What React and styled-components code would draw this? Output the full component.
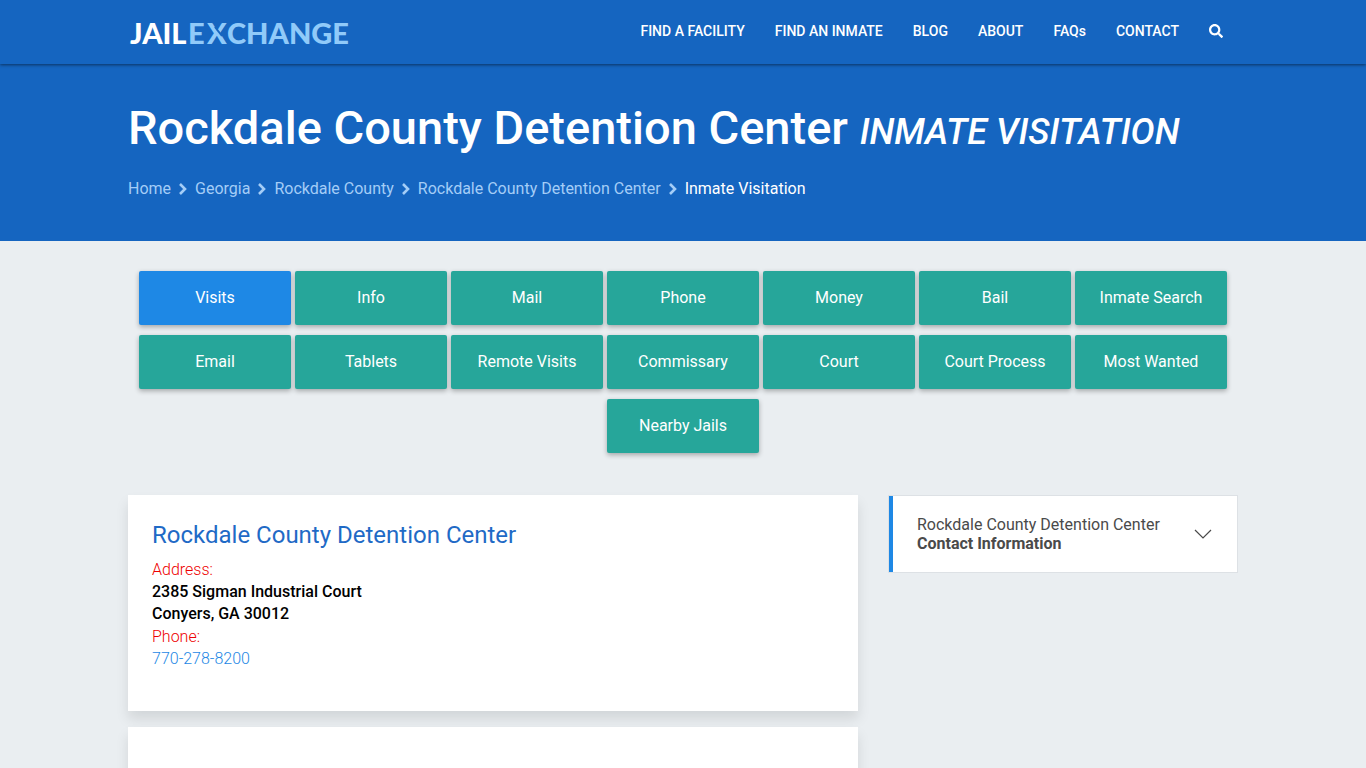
import React, { useState } from 'react';
import styled, { createGlobalStyle } from 'styled-components';
import { FaSearch } from 'react-icons/fa';

const navLinks = ['FIND A FACILITY', 'FIND AN INMATE', 'BLOG', 'ABOUT', 'FAQs', 'CONTACT']
const crumbs = ['Home', 'Georgia', 'Rockdale County', 'Rockdale County Detention Center']
const sections = [
    'Visits', 'Info', 'Mail', 'Phone', 'Money', 'Bail', 'Inmate Search',
    'Email', 'Tablets', 'Remote Visits', 'Commissary', 'Court', 'Court Process', 'Most Wanted',
    'Nearby Jails',
]

const Logo = () => (
    <svg width='224' height='44' viewBox='0 0 224 44' role='img' aria-label='JailExchange'>
        <g fontFamily='Lato, "Open Sans", sans-serif' fontSize='29' fontWeight='900'>
            <text x='2' y='35' fill='#fff'>JAIL</text>
            <text x='60' y='35' fill='#90caf9'>E</text>
            <text x='79' y='35' fill='#90caf9'>X</text>
            <text x='99' y='35' fill='#90caf9'>CHANGE</text>
        </g>
        {/* cut through the X */}
        <path d='M87 18 L94 27' stroke='#1565c0' strokeWidth='2' />
    </svg>
)

export default function App() {

    const [active, setActive] = useState('Visits')
    const [isOpen, setIsOpen] = useState(false)

    return (
        <>
            <GlobalStyle />
            <Header>
                <HeaderInner>
                    <LogoLink href='#'><Logo /></LogoLink>
                    <Nav>
                        {navLinks.map((name) => <NavLink href='#' key={name}>{name}</NavLink>)}
                        <SearchButton aria-label='Search'><FaSearch /></SearchButton>
                    </Nav>
                </HeaderInner>
            </Header>
            <Hero>
                <Container>
                    <Title>Rockdale County Detention Center <em>INMATE VISITATION</em></Title>
                    <Breadcrumb aria-label='Breadcrumb'>
                        {crumbs.map((name) => (
                            <React.Fragment key={name}>
                                <a href='#'>{name}</a>
                                <svg width='8' height='12' viewBox='0 0 8 12' fill='none' stroke='currentColor' strokeWidth='2.6'>
                                    <path d='M1 1 L6 6 L1 11' />
                                </svg>
                            </React.Fragment>
                        ))}
                        <span>Inmate Visitation</span>
                    </Breadcrumb>
                </Container>
            </Hero>
            <Container>
                <Sections>
                    {sections.map((name) => (
                        <SectionButton key={name} $active={name === active} onClick={() => setActive(name)}>
                            {name}
                        </SectionButton>
                    ))}
                </Sections>
                <Columns>
                    <Main>
                        <Card>
                            <h2>Rockdale County Detention Center</h2>
                            <Label>Address:</Label>
                            <Address>2385 Sigman Industrial Court<br />Conyers, GA 30012</Address>
                            <Label>Phone:</Label>
                            <a href='tel:770-278-8200'>770-278-8200</a>
                        </Card>
                        <Card />
                    </Main>
                    <Aside>
                        <ContactToggle aria-expanded={isOpen} onClick={() => setIsOpen(!isOpen)}>
                            <span>Rockdale County Detention Center<br /><b>Contact Information</b></span>
                            <svg width='18' height='10' viewBox='0 0 18 10' fill='none' stroke='currentColor' strokeWidth='1.2'>
                                <path d='M1 1 L9 9 L17 1' />
                            </svg>
                        </ContactToggle>
                    </Aside>
                </Columns>
            </Container>
        </>
    )
}

const GlobalStyle = createGlobalStyle`
    * {
        box-sizing: border-box;
    }
    body {
        margin: 0;
        background-color: #eaeef1;
        font-family: Roboto, "Liberation Sans", sans-serif;
        font-size: 16px;
    }
    a {
        text-decoration: none;
    }
    button {
        border: none;
        font-family: inherit;
        cursor: pointer;
    }
`

const Container = styled.div`
    width: 100%;
    max-width: 1110px;
    margin: 0 auto;
`

const Header = styled.header`
    position: relative;
    padding-bottom: 2px;
    background-color: #1565c0;
    box-shadow: 0 1px 3px rgba(0, 0, 0, 0.5);
`

const HeaderInner = styled(Container)`
    display: flex;
    align-items: center;
    justify-content: space-between;
    height: 62px;
`

const LogoLink = styled.a`
    display: flex;
`

const Nav = styled.nav`
    display: flex;
    align-items: center;
    padding-right: 15px;
    gap: 30px;
`

const NavLink = styled.a`
    color: #fff;
    font-size: 14px;
    font-weight: 500;
    line-height: 20px;
`

const SearchButton = styled.button`
    display: flex;
    padding: 0;
    background: none;
    color: #fff;
    font-size: 14px;
`

const Hero = styled.section`
    padding: 32px 0 42px;
    background-color: #1565c0;
`

const Title = styled.h1`
    margin: 0;
    color: #fff;
    font-size: 47px;
    font-weight: 500;
    line-height: 64px;

    em {
        font-size: 36px;
    }
`

const Breadcrumb = styled.nav`
    display: flex;
    align-items: center;
    gap: 8px;
    margin-top: 15px;
    color: #a4cdf7;
    line-height: 20px;

    a {
        color: #a4cdf7;
    }
    span {
        color: #fff;
    }
`

const Sections = styled.div`
    display: flex;
    flex-wrap: wrap;
    justify-content: center;
    gap: 10px 4px;
    padding: 30px 0 42px;
`

const SectionButton = styled.button`
    width: 152px;
    height: 54px;
    padding: 0 0 2px;
    border-radius: 2px;
    background-color: ${(props) => props.$active ? '#1e88e5' : '#26a69a'};
    box-shadow: 0 2px 5px rgba(0, 0, 0, 0.3);
    color: #fff;
    font-size: 16px;
`

const Columns = styled.div`
    display: flex;
    align-items: flex-start;
    gap: 30px;
`

const Main = styled.main`
    display: flex;
    flex: 1;
    flex-direction: column;
    gap: 16px;
`

const Card = styled.section`
    min-height: 216px;
    padding: 24px;
    background-color: #fff;
    box-shadow: 0 8px 12px rgba(0, 0, 0, 0.1);
    line-height: 22px;

    h2 {
        margin: 0 0 7px;
        color: #1f6ac6;
        font-size: 24px;
        font-weight: 400;
        line-height: 32px;
    }
    a {
        color: #1e88e5;
        font-weight: 300;
    }
`

const Label = styled.div`
    color: #e00;
    font-weight: 300;
    line-height: 23px;
`

const Address = styled.address`
    color: #000;
    font-style: normal;
    font-weight: 500;
`

const Aside = styled.aside`
    width: 350px;
`

const ContactToggle = styled.button`
    display: flex;
    align-items: center;
    justify-content: space-between;
    width: 100%;
    height: 78px;
    padding: 0 25px 0 28px;
    border: 1px solid #dde1e5;
    background-color: #fff;
    box-shadow: inset 4px 0 0 #1e88e5;
    color: #4a4a4a;
    font-size: 16px;
    line-height: 19px;
    text-align: left;
`
